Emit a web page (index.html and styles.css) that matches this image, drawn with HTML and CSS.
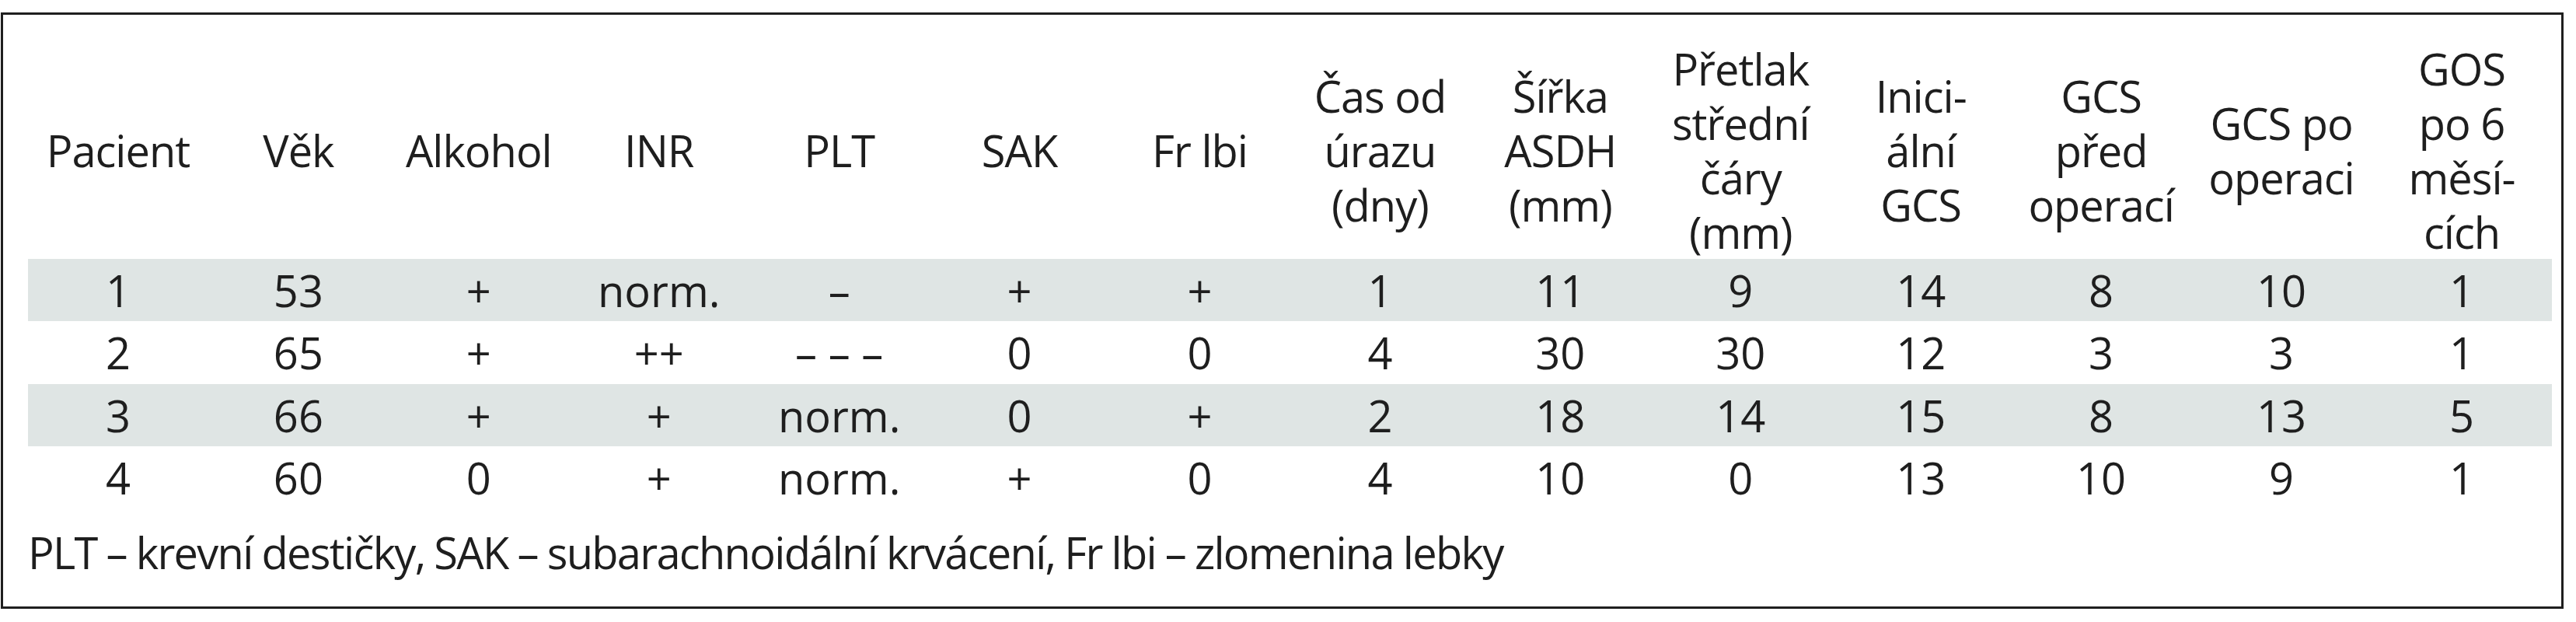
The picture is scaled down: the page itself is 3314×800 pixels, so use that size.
FILE: index.html
```html
<!DOCTYPE html>
<html lang="cs">
<head>
<meta charset="utf-8">
<title>Tabulka pacientů</title>
<link rel="stylesheet" href="styles.css">
</head>
<body>
<div class="frame">
  <table class="data">
    <thead>
      <tr>
        <th>Pacient</th>
        <th>Věk</th>
        <th>Alkohol</th>
        <th>INR</th>
        <th>PLT</th>
        <th>SAK</th>
        <th>Fr lbi</th>
        <th>Čas od<br>úrazu<br>(dny)</th>
        <th>Šířka<br>ASDH<br>(mm)</th>
        <th>Přetlak<br>střední<br>čáry<br>(mm)</th>
        <th>Inici-<br>ální<br>GCS</th>
        <th>GCS<br>před<br>operací</th>
        <th>GCS po<br>operaci</th>
        <th>GOS<br>po 6<br>měsí-<br>cích</th>
      </tr>
    </thead>
    <tbody>
      <tr class="alt">
        <td>1</td><td>53</td><td>+</td><td>norm.</td><td>–</td><td>+</td><td>+</td><td>1</td><td>11</td><td>9</td><td>14</td><td>8</td><td>10</td><td>1</td>
      </tr>
      <tr>
        <td>2</td><td>65</td><td>+</td><td>++</td><td>– – –</td><td>0</td><td>0</td><td>4</td><td>30</td><td>30</td><td>12</td><td>3</td><td>3</td><td>1</td>
      </tr>
      <tr class="alt">
        <td>3</td><td>66</td><td>+</td><td>+</td><td>norm.</td><td>0</td><td>+</td><td>2</td><td>18</td><td>14</td><td>15</td><td>8</td><td>13</td><td>5</td>
      </tr>
      <tr>
        <td>4</td><td>60</td><td>0</td><td>+</td><td>norm.</td><td>+</td><td>0</td><td>4</td><td>10</td><td>0</td><td>13</td><td>10</td><td>9</td><td>1</td>
      </tr>
    </tbody>
  </table>
  <p class="note">PLT – krevní destičky, SAK – subarachnoidální krvácení, Fr lbi – zlomenina lebky</p>
</div>
</body>
</html>
```
FILE: styles.css
```css
html, body {
  margin: 0;
  padding: 0;
  background: #ffffff;
}

body {
  font-family: "Open Sans", "Noto Sans", sans-serif;
  color: #1e1e1e;
}

.frame {
  box-sizing: border-box;
  width: 3297px;
  height: 767px;
  margin: 16px 0 0 1px;
  border: 3px solid #1f1f1f;
  padding: 0 12px 0 32px;
}

.data {
  width: 100%;
  border-collapse: collapse;
  table-layout: fixed;
  font-size: 56px;
}

.data thead tr {
  height: 314px;
}

.data th {
  font-weight: normal;
  line-height: 70px;
  padding: 34px 0 0;
  text-align: center;
  vertical-align: middle;
  letter-spacing: -1px;
}

.data tbody tr {
  height: 80.3px;
}

.data td {
  line-height: 80px;
  padding: 0;
  text-align: center;
  vertical-align: middle;
  white-space: nowrap;
}

.data tr.alt {
  background: #dfe5e4;
}

.note {
  margin: 0;
  padding-top: 21px;
  font-size: 56px;
  line-height: 70px;
  letter-spacing: -1.7px;
  word-spacing: -1px;
}
```
